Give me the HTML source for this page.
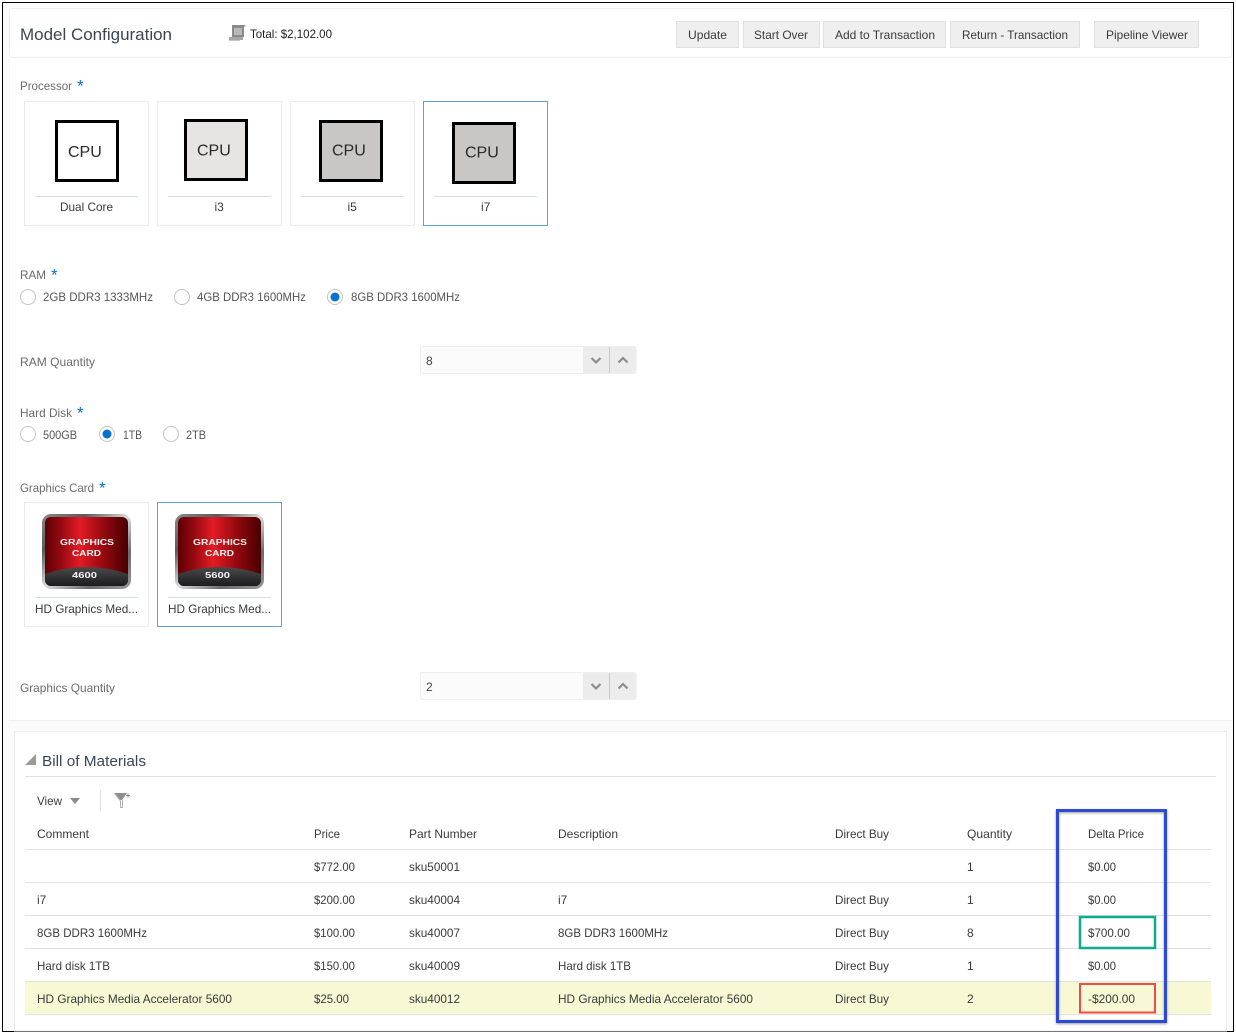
<!DOCTYPE html>
<html lang="en">
<head>
<meta charset="utf-8">
<title>Model Configuration</title>
<style>
html,body{margin:0;padding:0;background:#fff;}
svg{display:block;}
text{font-family:"Liberation Sans",Arial,sans-serif;font-size:12px;fill:#3a3a3a;}
.lb{fill:#6b6b6b;}
.rd{fill:#555;}
.st{font-size:17px;fill:#0572ce;}
.cpu{font-size:16px;fill:#2a2a2a;}
.gc{font-size:8px;font-weight:bold;fill:#f4f4f4;}
.gn{font-size:8.500px;font-weight:bold;fill:#f4f4f4;}
</style>
</head>
<body>
<svg width="1236" height="1034" viewBox="0 0 1236 1034" xmlns="http://www.w3.org/2000/svg">
<defs>
<linearGradient id="red" x1="0" x2="1" y1="0" y2="0">
<stop offset="0" stop-color="#5c0004"/><stop offset=".2" stop-color="#980a12"/><stop offset=".42" stop-color="#e31b25"/><stop offset=".7" stop-color="#96090f"/><stop offset="1" stop-color="#470002"/>
</linearGradient>
<linearGradient id="sil" x1="0" x2="1" y1="0" y2="1">
<stop offset="0" stop-color="#8a8a8a"/><stop offset=".25" stop-color="#5a5a5a"/><stop offset=".5" stop-color="#dcdcdc"/><stop offset=".75" stop-color="#6b6b6b"/><stop offset="1" stop-color="#9a9a9a"/>
</linearGradient>
<linearGradient id="drk" x1="0" x2="0" y1="0" y2="1">
<stop offset="0" stop-color="#4a4a4c"/><stop offset="1" stop-color="#1c1b1d"/>
</linearGradient>
<filter id="sh" x="-10%" y="-10%" width="120%" height="120%"><feDropShadow dx="0" dy="1" stdDeviation="1.400" flood-color="#000" flood-opacity=".4"/></filter>
</defs>

<!-- frame -->
<rect x="2.500" y="2.500" width="1231" height="1029" fill="#fbfbfb" stroke="#000" stroke-width="1"/>
<rect x="9" y="8" width="1223" height="712" fill="#fff"/>
<rect x="9.500" y="8.500" width="1222" height="49" rx="3" fill="#fff" stroke="#efefef"/>
<path d="M9 720.500H1232" stroke="#f0f0f0" fill="none"/>
<path d="M9.500 58V720" stroke="#f7f7f7" fill="none"/>

<!-- header -->
<text x="20" y="40" style="font-size:17px;fill:#3d4650" textLength="152" lengthAdjust="spacingAndGlyphs">Model Configuration</text>
<path d="M232 25h12v12h-12z" fill="#8a8a8a"/><path d="M234 28h8v7h-8z" fill="#b8b8b8"/><path d="M229 37h14v3h-14z" fill="#a6a6a6"/><path d="M229 40h11v1h-11z" fill="#c8c8c8"/><rect x="244" y="25" width="1.500" height="1.500" fill="#999"/>
<text x="250" y="38" textLength="82" lengthAdjust="spacingAndGlyphs" style="fill:#222">Total: $2,102.00</text>

<g fill="#efefef" stroke="#e0e0e0">
<rect x="676.500" y="21.500" width="62" height="26"/>
<rect x="743.500" y="21.500" width="76" height="26"/>
<rect x="823.500" y="21.500" width="122" height="26"/>
<rect x="950.500" y="21.500" width="129" height="26"/>
<rect x="1094.500" y="21.500" width="104" height="26"/>
</g>
<text x="688" y="39" textLength="39" lengthAdjust="spacingAndGlyphs">Update</text>
<text x="754" y="39" textLength="54" lengthAdjust="spacingAndGlyphs">Start Over</text>
<text x="835" y="39" textLength="100" lengthAdjust="spacingAndGlyphs">Add to Transaction</text>
<text x="962" y="39" textLength="106" lengthAdjust="spacingAndGlyphs">Return - Transaction</text>
<text x="1106" y="39" textLength="82" lengthAdjust="spacingAndGlyphs">Pipeline Viewer</text>

<!-- Processor -->
<text class="lb" x="20" y="90" textLength="52" lengthAdjust="spacingAndGlyphs">Processor</text>
<text class="st" x="77" y="91.500">*</text>
<g fill="#fff" stroke="#ececec">
<rect x="24.500" y="101.500" width="124" height="124"/>
<rect x="157.500" y="101.500" width="124" height="124"/>
<rect x="290.500" y="101.500" width="124" height="124"/>
</g>
<rect x="423.500" y="101.500" width="124" height="124" fill="#fff" stroke="#5aa5d6"/>
<rect x="56.500" y="121.500" width="61" height="59" fill="#fff" stroke="#000" stroke-width="3"/>
<rect x="185.500" y="120.500" width="61" height="59" fill="#e8e4e4" stroke="#000" stroke-width="3"/>
<rect x="320.500" y="121.500" width="61" height="59" fill="#cbc6c6" stroke="#000" stroke-width="3"/>
<rect x="453.500" y="123.500" width="61" height="59" fill="#cbc6c6" stroke="#000" stroke-width="3"/>
<text class="cpu" x="68" y="157">CPU</text>
<text class="cpu" x="197" y="155.500">CPU</text>
<text class="cpu" x="332" y="155.500">CPU</text>
<text class="cpu" x="465" y="157.500">CPU</text>
<path d="M35 196.500H138M168 196.500H271M301 196.500H404M434 196.500H537" stroke="#d6dfe6"/>
<text x="60" y="211" textLength="53" lengthAdjust="spacingAndGlyphs">Dual Core</text>
<text x="214.500" y="211">i3</text>
<text x="347.500" y="211">i5</text>
<text x="481" y="211">i7</text>

<!-- RAM -->
<text class="lb" x="20" y="279" textLength="26" lengthAdjust="spacingAndGlyphs">RAM</text>
<text class="st" x="51" y="280.500">*</text>
<g fill="#fff" stroke="#c4c4c4">
<circle cx="28" cy="297" r="7.500"/><circle cx="182" cy="297" r="7.500"/><circle cx="335" cy="297" r="7.500"/>
<circle cx="28" cy="434" r="7.500"/><circle cx="107" cy="434" r="7.500"/><circle cx="171" cy="434" r="7.500"/>
</g>
<circle cx="335" cy="297" r="4.500" fill="#0572ce"/>
<circle cx="107" cy="434" r="4.500" fill="#0572ce"/>
<text class="rd" x="43" y="301" textLength="110" lengthAdjust="spacingAndGlyphs">2GB DDR3 1333MHz</text>
<text class="rd" x="197" y="301" textLength="109" lengthAdjust="spacingAndGlyphs">4GB DDR3 1600MHz</text>
<text class="rd" x="351" y="301" textLength="109" lengthAdjust="spacingAndGlyphs">8GB DDR3 1600MHz</text>

<text class="lb" x="20" y="366" textLength="75" lengthAdjust="spacingAndGlyphs">RAM Quantity</text>
<rect x="420.500" y="346.500" width="215.500" height="27" rx="2" fill="#fbfbfb" stroke="#eeeeee"/>
<rect x="583" y="347" width="53" height="26" fill="#ececec"/>
<path d="M609.500 347V373" stroke="#c9c9c9"/>
<path d="M591.500 358l4.500 4.500 4.500-4.500M618.500 362.500l4.500-4.500 4.500 4.500" fill="none" stroke="#8c8c8c" stroke-width="2.200"/>
<text x="426" y="365" style="fill:#444">8</text>

<!-- Hard Disk -->
<text class="lb" x="20" y="417" textLength="52" lengthAdjust="spacingAndGlyphs">Hard Disk</text>
<text class="st" x="77" y="418.500">*</text>
<text class="rd" x="43" y="439" textLength="34" lengthAdjust="spacingAndGlyphs">500GB</text>
<text class="rd" x="123" y="439" textLength="19" lengthAdjust="spacingAndGlyphs">1TB</text>
<text class="rd" x="186" y="439" textLength="20" lengthAdjust="spacingAndGlyphs">2TB</text>

<!-- Graphics Card -->
<text class="lb" x="20" y="492" textLength="74" lengthAdjust="spacingAndGlyphs">Graphics Card</text>
<text class="st" x="99" y="493.500">*</text>
<rect x="24.500" y="502.500" width="124" height="124" fill="#fff" stroke="#ececec"/>
<rect x="157.500" y="502.500" width="124" height="124" fill="#fff" stroke="#5aa5d6"/>

<g>
<rect x="42" y="514" width="89" height="75" rx="9" fill="url(#sil)"/>
<rect x="45" y="517" width="83" height="69" rx="6" fill="url(#red)"/>
<path d="M45 574Q86 560 128 574V580a6 6 0 0 1-6 6H51a6 6 0 0 1-6-6Z" fill="url(#drk)"/>
<text class="gc" x="60" y="545" textLength="54" lengthAdjust="spacingAndGlyphs">GRAPHICS</text>
<text class="gc" x="72" y="556" textLength="29" lengthAdjust="spacingAndGlyphs">CARD</text>
<text class="gn" x="72" y="578" textLength="25" lengthAdjust="spacingAndGlyphs">4600</text>
</g>
<g>
<rect x="175" y="514" width="89" height="75" rx="9" fill="url(#sil)"/>
<rect x="178" y="517" width="83" height="69" rx="6" fill="url(#red)"/>
<path d="M178 574Q219 560 261 574V580a6 6 0 0 1-6 6H184a6 6 0 0 1-6-6Z" fill="url(#drk)"/>
<text class="gc" x="193" y="545" textLength="54" lengthAdjust="spacingAndGlyphs">GRAPHICS</text>
<text class="gc" x="205" y="556" textLength="29" lengthAdjust="spacingAndGlyphs">CARD</text>
<text class="gn" x="205" y="578" textLength="25" lengthAdjust="spacingAndGlyphs">5600</text>
</g>
<path d="M35 597.500H138M168 597.500H271" stroke="#d6dfe6"/>
<text x="35" y="613" textLength="103" lengthAdjust="spacingAndGlyphs">HD Graphics Med...</text>
<text x="168" y="613" textLength="103" lengthAdjust="spacingAndGlyphs">HD Graphics Med...</text>

<text class="lb" x="20" y="692" textLength="95" lengthAdjust="spacingAndGlyphs">Graphics Quantity</text>
<rect x="420.500" y="672.500" width="215.500" height="27" rx="2" fill="#fbfbfb" stroke="#eeeeee"/>
<rect x="583" y="673" width="53" height="26" fill="#ececec"/>
<path d="M609.500 673V699" stroke="#c9c9c9"/>
<path d="M591.500 684l4.500 4.500 4.500-4.500M618.500 688.500l4.500-4.500 4.500 4.500" fill="none" stroke="#8c8c8c" stroke-width="2.200"/>
<text x="426" y="691" style="fill:#444">2</text>

<!-- BOM panel -->
<rect x="14.500" y="731.500" width="1212" height="299.500" fill="#fff" stroke="#ececec"/>
<path d="M36 754V765H25Z" fill="#9a9a9a"/>
<text x="42" y="766" style="font-size:15px;fill:#3d4650" textLength="104" lengthAdjust="spacingAndGlyphs">Bill of Materials</text>
<path d="M25 776.500H1216" stroke="#e2e2e2"/>
<text x="37" y="805" textLength="25" lengthAdjust="spacingAndGlyphs">View</text>
<path d="M70 798H80L75 804Z" fill="#8a8a8a"/>
<path d="M100.500 790V811" stroke="#e2e2e2"/>
<path d="M114 793H127L122 800L120 800Z" fill="#8f8f8f"/>
<path d="M115 794L120.500 801V807.500H122.500V800" fill="none" stroke="#b4b4b4"/>
<path d="M126 795.500H130M128 793.500V797.500" stroke="#8a8a8a"/>

<rect x="25" y="982" width="1186" height="32" fill="#f8f8d5"/>
<path d="M25 849.500H1211M25 882.500H1211M25 915.500H1211M25 948.500H1211M25 981.500H1211M25 1014.500H1211" stroke="#e2e2e2"/>

<g>
<text x="37" y="838" textLength="52" lengthAdjust="spacingAndGlyphs">Comment</text>
<text x="314" y="838" textLength="26" lengthAdjust="spacingAndGlyphs">Price</text>
<text x="409" y="838" textLength="68" lengthAdjust="spacingAndGlyphs">Part Number</text>
<text x="558" y="838" textLength="60" lengthAdjust="spacingAndGlyphs">Description</text>
<text x="835" y="838" textLength="54" lengthAdjust="spacingAndGlyphs">Direct Buy</text>
<text x="967" y="838" textLength="45" lengthAdjust="spacingAndGlyphs">Quantity</text>
<text x="1088" y="838" textLength="56" lengthAdjust="spacingAndGlyphs">Delta Price</text>
</g>

<text x="314" y="871" textLength="41" lengthAdjust="spacingAndGlyphs">$772.00</text>
<text x="409" y="871" textLength="51" lengthAdjust="spacingAndGlyphs">sku50001</text>
<text x="967" y="871">1</text>
<text x="1088" y="871" textLength="28" lengthAdjust="spacingAndGlyphs">$0.00</text>

<text x="37" y="904">i7</text>
<text x="314" y="904" textLength="41" lengthAdjust="spacingAndGlyphs">$200.00</text>
<text x="409" y="904" textLength="51" lengthAdjust="spacingAndGlyphs">sku40004</text>
<text x="558" y="904">i7</text>
<text x="835" y="904" textLength="54" lengthAdjust="spacingAndGlyphs">Direct Buy</text>
<text x="967" y="904">1</text>
<text x="1088" y="904" textLength="28" lengthAdjust="spacingAndGlyphs">$0.00</text>

<text x="37" y="937" textLength="110" lengthAdjust="spacingAndGlyphs">8GB DDR3 1600MHz</text>
<text x="314" y="937" textLength="41" lengthAdjust="spacingAndGlyphs">$100.00</text>
<text x="409" y="937" textLength="51" lengthAdjust="spacingAndGlyphs">sku40007</text>
<text x="558" y="937" textLength="110" lengthAdjust="spacingAndGlyphs">8GB DDR3 1600MHz</text>
<text x="835" y="937" textLength="54" lengthAdjust="spacingAndGlyphs">Direct Buy</text>
<text x="967" y="937">8</text>
<text x="1088" y="937" textLength="42" lengthAdjust="spacingAndGlyphs">$700.00</text>

<text x="37" y="970" textLength="73" lengthAdjust="spacingAndGlyphs">Hard disk 1TB</text>
<text x="314" y="970" textLength="41" lengthAdjust="spacingAndGlyphs">$150.00</text>
<text x="409" y="970" textLength="51" lengthAdjust="spacingAndGlyphs">sku40009</text>
<text x="558" y="970" textLength="73" lengthAdjust="spacingAndGlyphs">Hard disk 1TB</text>
<text x="835" y="970" textLength="54" lengthAdjust="spacingAndGlyphs">Direct Buy</text>
<text x="967" y="970">1</text>
<text x="1088" y="970" textLength="28" lengthAdjust="spacingAndGlyphs">$0.00</text>

<text x="37" y="1003" textLength="195" lengthAdjust="spacingAndGlyphs">HD Graphics Media Accelerator 5600</text>
<text x="314" y="1003" textLength="35" lengthAdjust="spacingAndGlyphs">$25.00</text>
<text x="409" y="1003" textLength="51" lengthAdjust="spacingAndGlyphs">sku40012</text>
<text x="558" y="1003" textLength="195" lengthAdjust="spacingAndGlyphs">HD Graphics Media Accelerator 5600</text>
<text x="835" y="1003" textLength="54" lengthAdjust="spacingAndGlyphs">Direct Buy</text>
<text x="967" y="1003">2</text>
<text x="1088" y="1003" textLength="47" lengthAdjust="spacingAndGlyphs">-$200.00</text>

<!-- callouts -->
<rect x="1080" y="917" width="75" height="31" fill="none" stroke="#0aae8e" stroke-width="2.500"/>
<rect x="1080" y="984" width="75" height="28.500" fill="none" stroke="#f04a4a" stroke-width="2"/>
<rect x="1057.500" y="810.500" width="108" height="211" fill="none" stroke="#2f4bd0" stroke-width="3" filter="url(#sh)"/>
</svg>
</body>
</html>
